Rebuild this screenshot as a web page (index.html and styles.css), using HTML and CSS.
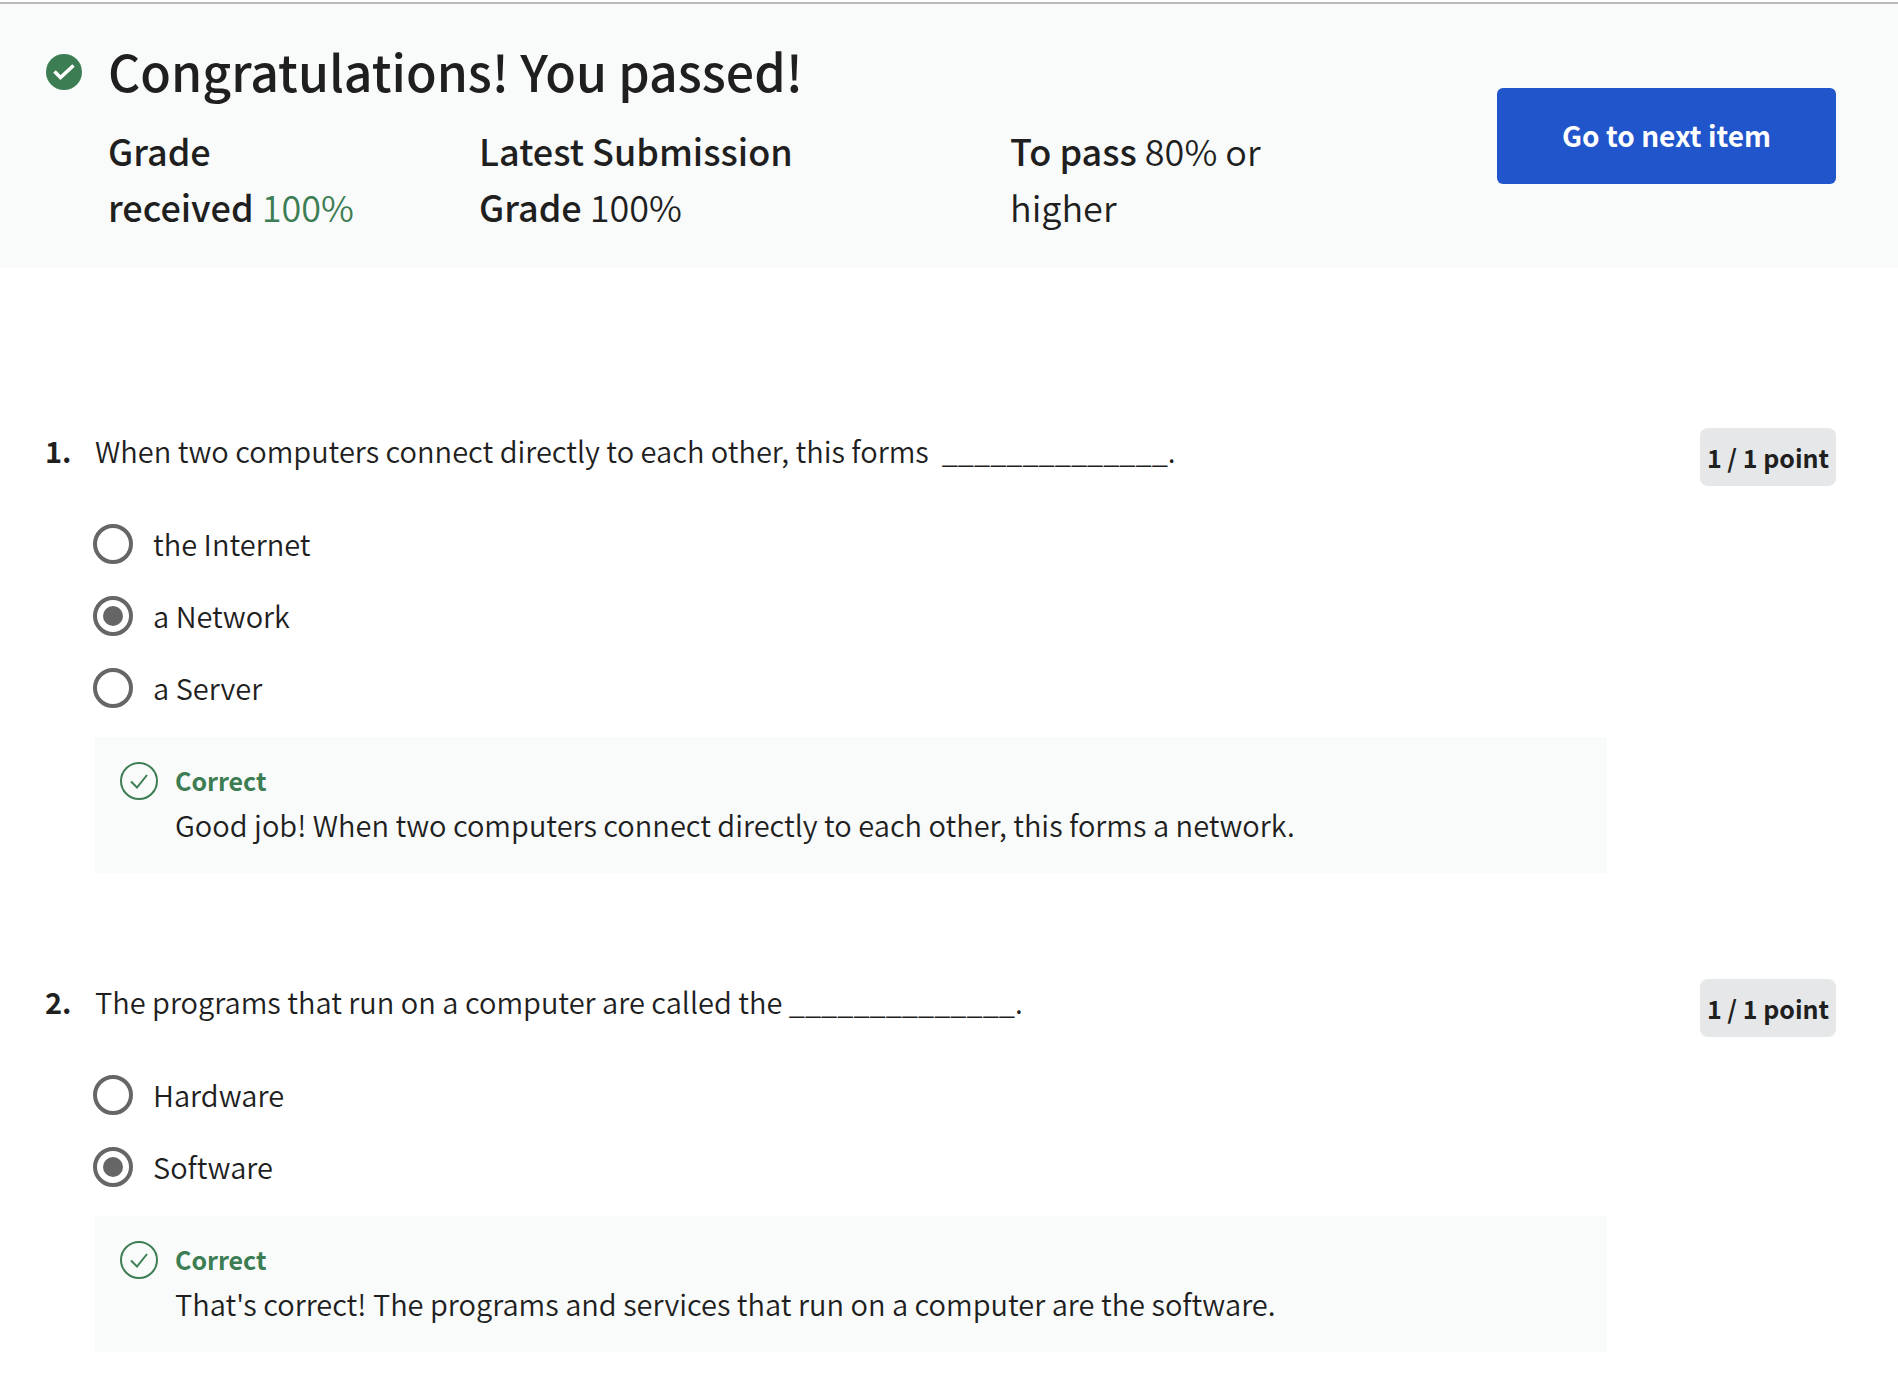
FILE: index.html
```html
<!DOCTYPE html>
<html lang="en">
<head>
  <meta charset="utf-8">
  <meta name="viewport" content="width=device-width, initial-scale=1">
  <title>Quiz results</title>
  <link rel="stylesheet" href="styles.css">
</head>
<body>
  <header class="banner">
    <svg class="banner-icon" viewBox="0 0 36 36" aria-hidden="true">
      <circle cx="18" cy="18" r="18" fill="#3d7d53"/>
      <path d="M8.5 17.5l6 6L27.5 11.5" fill="none" stroke="#fff" stroke-width="3.6"/>
    </svg>
    <div class="summary">
      <h1 class="title">Congratulations! You passed!</h1>
      <div class="grades">
        <p class="grade"><strong>Grade received</strong> <span class="pass">100%</span></p>
        <p class="grade"><strong>Latest Submission Grade</strong> 100%</p>
        <p class="grade"><strong>To pass</strong> 80% or higher</p>
      </div>
    </div>
    <button class="next" type="button">Go to next item</button>
  </header>

  <main class="questions">
    <section class="question">
      <div class="number">1.</div>
      <div class="content">
        <h2 class="prompt" id="q1">When two computers connect directly to each other, this forms &nbsp;______________.</h2>
        <div class="options" role="radiogroup" aria-labelledby="q1">
          <label class="option"><input class="radio" type="radio" name="q1">the Internet</label>
          <label class="option"><input class="radio" type="radio" name="q1" checked>a Network</label>
          <label class="option"><input class="radio" type="radio" name="q1">a Server</label>
        </div>
        <div class="feedback">
          <svg class="feedback-icon" viewBox="0 0 38 38" fill="none" stroke="#3d7d53" aria-hidden="true">
            <circle cx="19" cy="19" r="18" stroke-width="2"/>
            <path d="M11 19.5l6 6L27 13" stroke-width="2"/>
          </svg>
          <div>
            <p class="verdict">Correct</p>
            <p class="explanation">Good job! When two computers connect directly to each other, this forms a network.</p>
          </div>
        </div>
      </div>
      <div class="points">1 / 1 point</div>
    </section>

    <section class="question">
      <div class="number">2.</div>
      <div class="content">
        <h2 class="prompt" id="q2">The programs that run on a computer are called the ______________.</h2>
        <div class="options" role="radiogroup" aria-labelledby="q2">
          <label class="option"><input class="radio" type="radio" name="q2">Hardware</label>
          <label class="option"><input class="radio" type="radio" name="q2" checked>Software</label>
        </div>
        <div class="feedback">
          <svg class="feedback-icon" viewBox="0 0 38 38" fill="none" stroke="#3d7d53" aria-hidden="true">
            <circle cx="19" cy="19" r="18" stroke-width="2"/>
            <path d="M11 19.5l6 6L27 13" stroke-width="2"/>
          </svg>
          <div>
            <p class="verdict">Correct</p>
            <p class="explanation">That's correct! The programs and services that run on a computer are the software.</p>
          </div>
        </div>
      </div>
      <div class="points">1 / 1 point</div>
    </section>
  </main>
</body>
</html>
```
FILE: styles.css
```css
* {
  box-sizing: border-box;
}

body {
  margin: 0;
  padding-top: 2px;
  background: #fff;
  color: #1f1f1f;
  font-family: "Noto Sans CJK SC", "Noto Sans", sans-serif;
  font-size: 29px;
  font-weight: 350;
  line-height: 36px;
}

h1, h2, p {
  margin: 0;
}

/* Result banner */
.banner {
  display: flex;
  align-items: flex-start;
  padding: 36px 62px 34px 46px;
  border-top: 2px solid #bbb;
  background: #f9fbfa;
}

.banner-icon {
  flex: none;
  width: 36px;
  height: 36px;
  margin: 14px 26px 0 0;
}

.summary {
  flex: 1;
}

.title {
  margin-bottom: 22px;
  font-size: 50px;
  font-weight: 500;
  line-height: 60px;
}

.grades {
  display: grid;
  grid-template-columns: 248fr 408fr 310fr;
  column-gap: 123px;
}

.grade {
  font-size: 36px;
  line-height: 56px;
}

.grade strong {
  font-weight: 500;
}

.pass {
  color: #3d7d53;
}

.next {
  flex: none;
  width: 339px;
  height: 96px;
  margin: 48px 0 0 177px;
  padding: 0 0 2px;
  border: 0;
  border-radius: 6px;
  background: #2155cb;
  color: #fff;
  font: inherit;
  font-size: 28px;
  font-weight: 700;
}

/* Questions */
.questions {
  display: grid;
  row-gap: 106px;
  padding: 160px 62px 26px 45px;
}

.question {
  display: grid;
  grid-template-columns: 50px 1fr auto;
  align-items: start;
}

.number {
  padding-top: 4px;
  font-weight: 700;
}

.content {
  padding-top: 4px;
}

.prompt {
  font-size: 29px;
  font-weight: 350;
}

.points {
  width: 136px;
  margin-left: 93px;
  border-radius: 8px;
  background: #e5e7e8;
  font-size: 25px;
  font-weight: 700;
  line-height: 58px;
  text-align: center;
  white-space: nowrap;
}

.options {
  display: grid;
  justify-items: start;
  row-gap: 32px;
  margin: 56px 0 29px -2px;
}

.option {
  display: flex;
  align-items: flex-start;
  gap: 20px;
  line-height: 38px;
}

.radio {
  appearance: none;
  width: 40px;
  height: 40px;
  margin: 0;
  border: 4px solid #666;
  border-radius: 50%;
  background: #fff;
}

.radio:checked {
  padding: 6px;
}

.radio:checked::before {
  content: "";
  display: block;
  width: 20px;
  height: 20px;
  border-radius: 50%;
  background: #666;
}

/* Answer feedback */
.feedback {
  display: flex;
  gap: 17px;
  padding: 21px 25px 27px;
  background: #f9fbfa;
  line-height: 44px;
}

.feedback-icon {
  flex: none;
  width: 38px;
  height: 38px;
  margin-top: 4px;
}

.verdict {
  color: #3d7d53;
  font-size: 25px;
  font-weight: 700;
}
```
